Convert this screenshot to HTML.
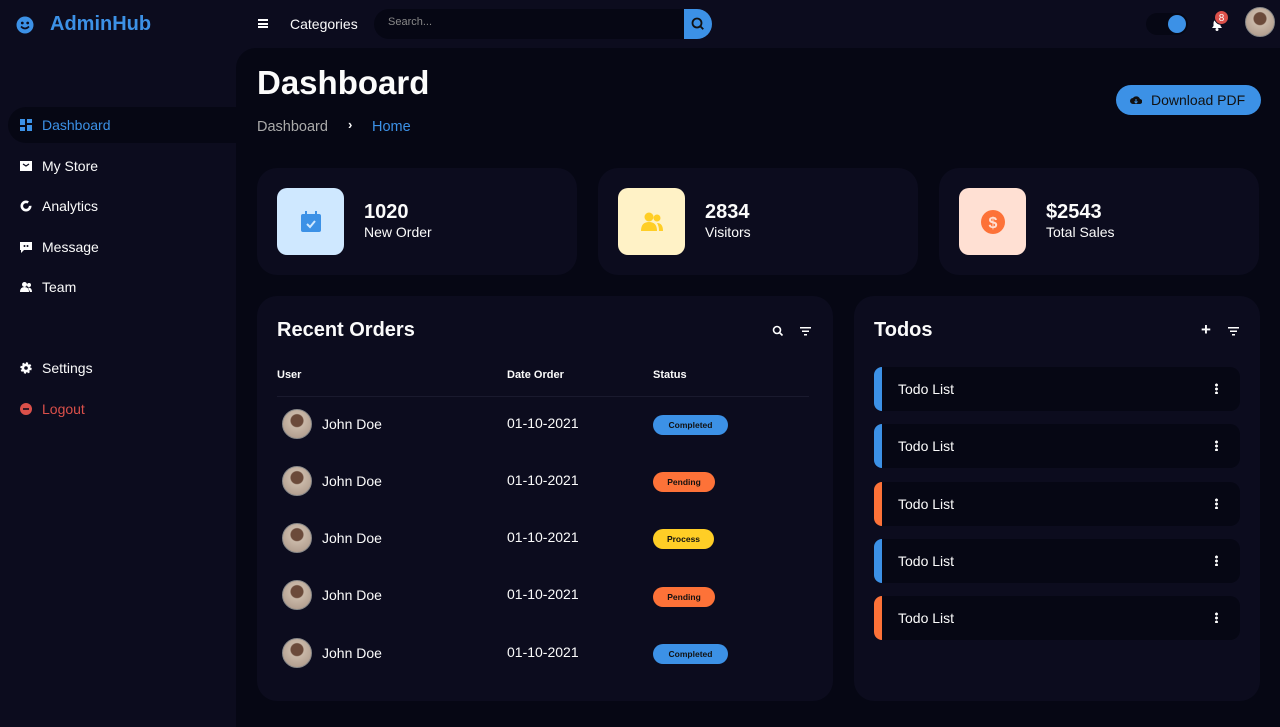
<!DOCTYPE html>
<html><head><meta charset="utf-8"><style>
*{margin:0;padding:0;box-sizing:border-box}
body{width:1280px;height:727px;overflow:hidden;background:#0c0c1e;font-family:"Liberation Sans",sans-serif;color:#fbfbfb;position:relative}
.abs{position:absolute}
.logo{left:16px;top:13px;font-size:20px;font-weight:bold;color:#3c91e6;display:flex;align-items:center}
.side a{position:absolute;left:20px;display:flex;align-items:center;font-size:14px;color:#fbfbfb;height:20px}
.side a svg{width:12px;height:12px;margin-right:10px}
.act{left:8px;top:107px;width:228px;height:36px;background:#060714;border-radius:18px 0 0 18px}
.main{left:236px;top:48px;width:1044px;height:679px;background:#060714;border-radius:20px 0 0 0}
.card{background:#0c0c1e;border-radius:20px}
.stat{top:168px;width:320px;height:107px;display:flex;align-items:center;padding-left:20px}
.ic{width:67px;height:67px;border-radius:10px;display:flex;align-items:center;justify-content:center;margin-right:20px}
.stat b{display:block;font-size:20px}
.stat span{font-size:14px}
.th{top:369px;font-size:11px;font-weight:bold}
.row{position:absolute;left:282px;height:32px;display:flex;align-items:center;font-size:14px}
.av{width:30px;height:30px;border-radius:50%;background:radial-gradient(circle at 50% 38%,#6b4a3a 0 6px,#c9b8a8 7px,#a89384 100%);margin-right:10px;border:1px solid #888}
.date{position:absolute;left:507px;font-size:14px}
.st{position:absolute;left:653px;height:20px;border-radius:10px;font-size:8.5px;font-weight:bold;color:#111;display:flex;align-items:center;justify-content:center}
.todo{position:absolute;left:874px;width:366px;height:44px;background:#060714;border-radius:10px;display:flex;align-items:center;padding-left:24px;font-size:14px}
.todo::before{content:"";position:absolute;left:0;top:0;bottom:0;width:8px;border-radius:10px 0 0 10px;background:var(--c)}
.dots{position:absolute;right:22px;top:16px;width:3px;height:11px;background:radial-gradient(circle,#fff 1.3px,transparent 1.6px) 0 0/3px 4px}
</style></head><body>
<div class="abs logo"><svg width="18" height="18" viewBox="0 0 18 18"><circle cx="9" cy="9" r="8.5" fill="#3c91e6"/><circle cx="6.3" cy="7" r="1.4" fill="#0c0c1e"/><circle cx="11.7" cy="7" r="1.4" fill="#0c0c1e"/><path d="M5 10.5q4 4 8 0" stroke="#0c0c1e" stroke-width="1.6" fill="none"/></svg><span style="margin-left:16px">AdminHub</span></div>
<div class="abs" style="left:258px;top:19px;width:10px;height:9px;border-top:2px solid #fff;border-bottom:2px solid #fff"><div style="margin-top:1.5px;height:2px;background:#fff"></div></div>
<div class="abs" style="left:290px;top:16px;font-size:14px">Categories</div>
<div class="abs" style="left:374px;top:9px;width:312px;height:30px;background:#060714;border-radius:15px 0 0 15px;font-size:11px;color:#888;padding:7px 14px">Search...</div>
<div class="abs" style="left:684px;top:9px;width:28px;height:30px;background:#3c91e6;border-radius:0 15px 15px 0"><svg width="28" height="30" viewBox="0 0 28 30"><circle cx="13" cy="14" r="4.5" stroke="#111" stroke-width="1.8" fill="none"/><path d="M16.3 17.3l3 3" stroke="#111" stroke-width="1.8"/></svg></div>
<div class="abs" style="left:1146px;top:13px;width:42px;height:22px;background:#060714;border-radius:11px"><div style="position:absolute;right:2px;top:2px;width:18px;height:18px;border-radius:50%;background:#3c91e6"></div></div>
<svg class="abs" style="left:1209px;top:16px" width="16" height="16" viewBox="0 0 16 16"><path d="M3 12h10l-1.5-2V7a3.5 3.5 0 0 0-7 0v3z" fill="#fff"/><circle cx="8" cy="13.5" r="1.5" fill="#fff"/></svg>
<div class="abs" style="left:1214px;top:10px;width:15px;height:15px;border-radius:50%;background:#db504a;font-size:10px;text-align:center;line-height:15px;border:1px solid #0c0c1e">8</div>
<div class="abs av" style="left:1245px;top:7px;width:30px;height:30px"></div>

<div class="abs act"></div>
<div class="side">
<a style="top:115px;color:#3c91e6"><svg viewBox="0 0 12 12" fill="#3c91e6"><rect x="0" y="0" width="5" height="6"/><rect x="7" y="0" width="5" height="4"/><rect x="0" y="8" width="5" height="4"/><rect x="7" y="6" width="5" height="6"/></svg>Dashboard</a>
<a style="top:156px"><svg viewBox="0 0 12 12"><rect y="1" width="12" height="10" fill="#fff"/><path d="M3 4l3 2 3-2" stroke="#0c0c1e" fill="none" stroke-width="1.2"/></svg>My Store</a>
<a style="top:196px"><svg viewBox="0 0 12 12"><circle cx="6" cy="6" r="4.2" stroke="#fff" stroke-width="2.6" fill="none" stroke-dasharray="22 4"/></svg>Analytics</a>
<a style="top:237px"><svg viewBox="0 0 12 12"><path d="M0 1h12v8H4l-3 3V9H0z" fill="#fff"/><circle cx="4.5" cy="5" r="1" fill="#0c0c1e"/><circle cx="7.5" cy="5" r="1" fill="#0c0c1e"/></svg>Message</a>
<a style="top:277px"><svg viewBox="0 0 12 12" fill="#fff"><circle cx="4.5" cy="3.5" r="2.5"/><path d="M0 11q0-5 4.5-5t4.5 5z"/><circle cx="9" cy="4" r="2" /><path d="M8 6.5q4 0 4 4.5h-2z"/></svg>Team</a>
<a style="top:358px"><svg viewBox="0 0 12 12"><circle cx="6" cy="6" r="4.5" fill="#fff" stroke="#fff" stroke-width="2.4" stroke-dasharray="2 1.5"/><circle cx="6" cy="6" r="1.8" fill="#0c0c1e"/></svg>Settings</a>
<a style="top:399px;color:#db504a"><svg viewBox="0 0 12 12"><circle cx="6" cy="6" r="6" fill="#db504a"/><path d="M3 6h6" stroke="#0c0c1e" stroke-width="1.6"/></svg>Logout</a>
</div>

<div class="abs main"></div>
<div class="abs" style="left:257px;top:64px;font-size:33px;font-weight:bold">Dashboard</div>
<div class="abs" style="left:257px;top:119px;font-size:14.5px;color:#aaa">Dashboard</div>
<div class="abs" style="left:348px;top:117px;font-size:13px;font-weight:bold">›</div>
<div class="abs" style="left:372px;top:119px;font-size:14.5px;color:#3c91e6">Home</div>
<div class="abs" style="left:1116px;top:85px;width:145px;height:30px;border-radius:15px;background:#3c91e6;color:#111;font-size:14px;display:flex;align-items:center;padding-left:14px"><svg width="12" height="10" viewBox="0 0 12 10" style="margin-right:9px"><path d="M3 9a3 3 0 0 1 0-6 4 4 0 0 1 7 1 2.5 2.5 0 0 1-0.5 5z" fill="#111"/><path d="M6 4v4M4.5 6.5L6 8l1.5-1.5" stroke="#3c91e6" fill="none"/></svg>Download PDF</div>

<div class="abs card stat" style="left:257px"><div class="ic" style="background:#cfe8ff"><svg width="24" height="24" viewBox="0 0 24 24"><rect x="2" y="4" width="20" height="18" rx="2" fill="#3c91e6"/><rect x="6" y="1" width="2" height="5" fill="#3c91e6"/><rect x="16" y="1" width="2" height="5" fill="#3c91e6"/><path d="M8 14l3 3 5-6" stroke="#cfe8ff" stroke-width="2" fill="none"/></svg></div><div><b>1020</b><span>New Order</span></div></div>
<div class="abs card stat" style="left:598px"><div class="ic" style="background:#fff2c6"><svg width="26" height="24" viewBox="0 0 26 24" fill="#ffce26"><circle cx="10" cy="7" r="4.5"/><path d="M2 21q0-9 8-9t8 9z"/><circle cx="18" cy="8" r="3.5"/><path d="M18 13q6 0 6 8h-4q0-5-2-8z"/></svg></div><div><b>2834</b><span>Visitors</span></div></div>
<div class="abs card stat" style="left:939px"><div class="ic" style="background:#ffe0d3"><svg width="26" height="26" viewBox="0 0 26 26"><circle cx="13" cy="13" r="12" fill="#fd7238"/><text x="13" y="19" font-size="16" font-weight="bold" fill="#ffe0d3" text-anchor="middle" font-family="Liberation Sans">$</text></svg></div><div><b>$2543</b><span>Total Sales</span></div></div>

<div class="abs card" style="left:257px;top:296px;width:576px;height:405px"></div>
<div class="abs" style="left:277px;top:319px;font-size:20px;font-weight:bold">Recent Orders</div>
<svg class="abs" style="left:772px;top:325px" width="12" height="12" viewBox="0 0 12 12"><circle cx="5" cy="5" r="3.5" stroke="#fff" stroke-width="1.6" fill="none"/><path d="M7.5 7.5l3 3" stroke="#fff" stroke-width="1.6"/></svg>
<svg class="abs" style="left:800px;top:326px" width="11" height="10" viewBox="0 0 11 10" fill="#fff"><rect y="1" width="11" height="1.5"/><rect x="2" y="4.5" width="7" height="1.5"/><rect x="4" y="8" width="3" height="1.5"/></svg>
<div class="abs th" style="left:277px">User</div><div class="abs th" style="left:507px">Date Order</div><div class="abs th" style="left:653px">Status</div>
<div class="abs" style="left:277px;top:396px;width:532px;height:1px;background:#1a1a2e"></div>

<div class="row" style="top:408px"><div class="av"></div>John Doe</div><div class="date" style="top:415px">01-10-2021</div><div class="st" style="top:415px;width:75px;background:#3c91e6">Completed</div>
<div class="row" style="top:465px"><div class="av"></div>John Doe</div><div class="date" style="top:472px">01-10-2021</div><div class="st" style="top:472px;width:62px;background:#fd7238">Pending</div>
<div class="row" style="top:522px"><div class="av"></div>John Doe</div><div class="date" style="top:529px">01-10-2021</div><div class="st" style="top:529px;width:61px;background:#ffce26">Process</div>
<div class="row" style="top:579px"><div class="av"></div>John Doe</div><div class="date" style="top:586px">01-10-2021</div><div class="st" style="top:587px;width:62px;background:#fd7238">Pending</div>
<div class="row" style="top:637px"><div class="av"></div>John Doe</div><div class="date" style="top:644px">01-10-2021</div><div class="st" style="top:644px;width:75px;background:#3c91e6">Completed</div>

<div class="abs card" style="left:854px;top:296px;width:406px;height:405px"></div>
<div class="abs" style="left:874px;top:319px;font-size:20px;font-weight:bold">Todos</div>
<div class="abs" style="left:1201px;top:320px;font-size:17px;font-weight:bold">+</div>
<svg class="abs" style="left:1228px;top:326px" width="11" height="10" viewBox="0 0 11 10" fill="#fff"><rect y="1" width="11" height="1.5"/><rect x="2" y="4.5" width="7" height="1.5"/><rect x="4" y="8" width="3" height="1.5"/></svg>
<div class="todo" style="top:367px;--c:#3c91e6">Todo List<i class="dots"></i></div>
<div class="todo" style="top:424px;--c:#3c91e6">Todo List<i class="dots"></i></div>
<div class="todo" style="top:482px;--c:#fd7238">Todo List<i class="dots"></i></div>
<div class="todo" style="top:539px;--c:#3c91e6">Todo List<i class="dots"></i></div>
<div class="todo" style="top:596px;--c:#fd7238">Todo List<i class="dots"></i></div>
</body></html>
